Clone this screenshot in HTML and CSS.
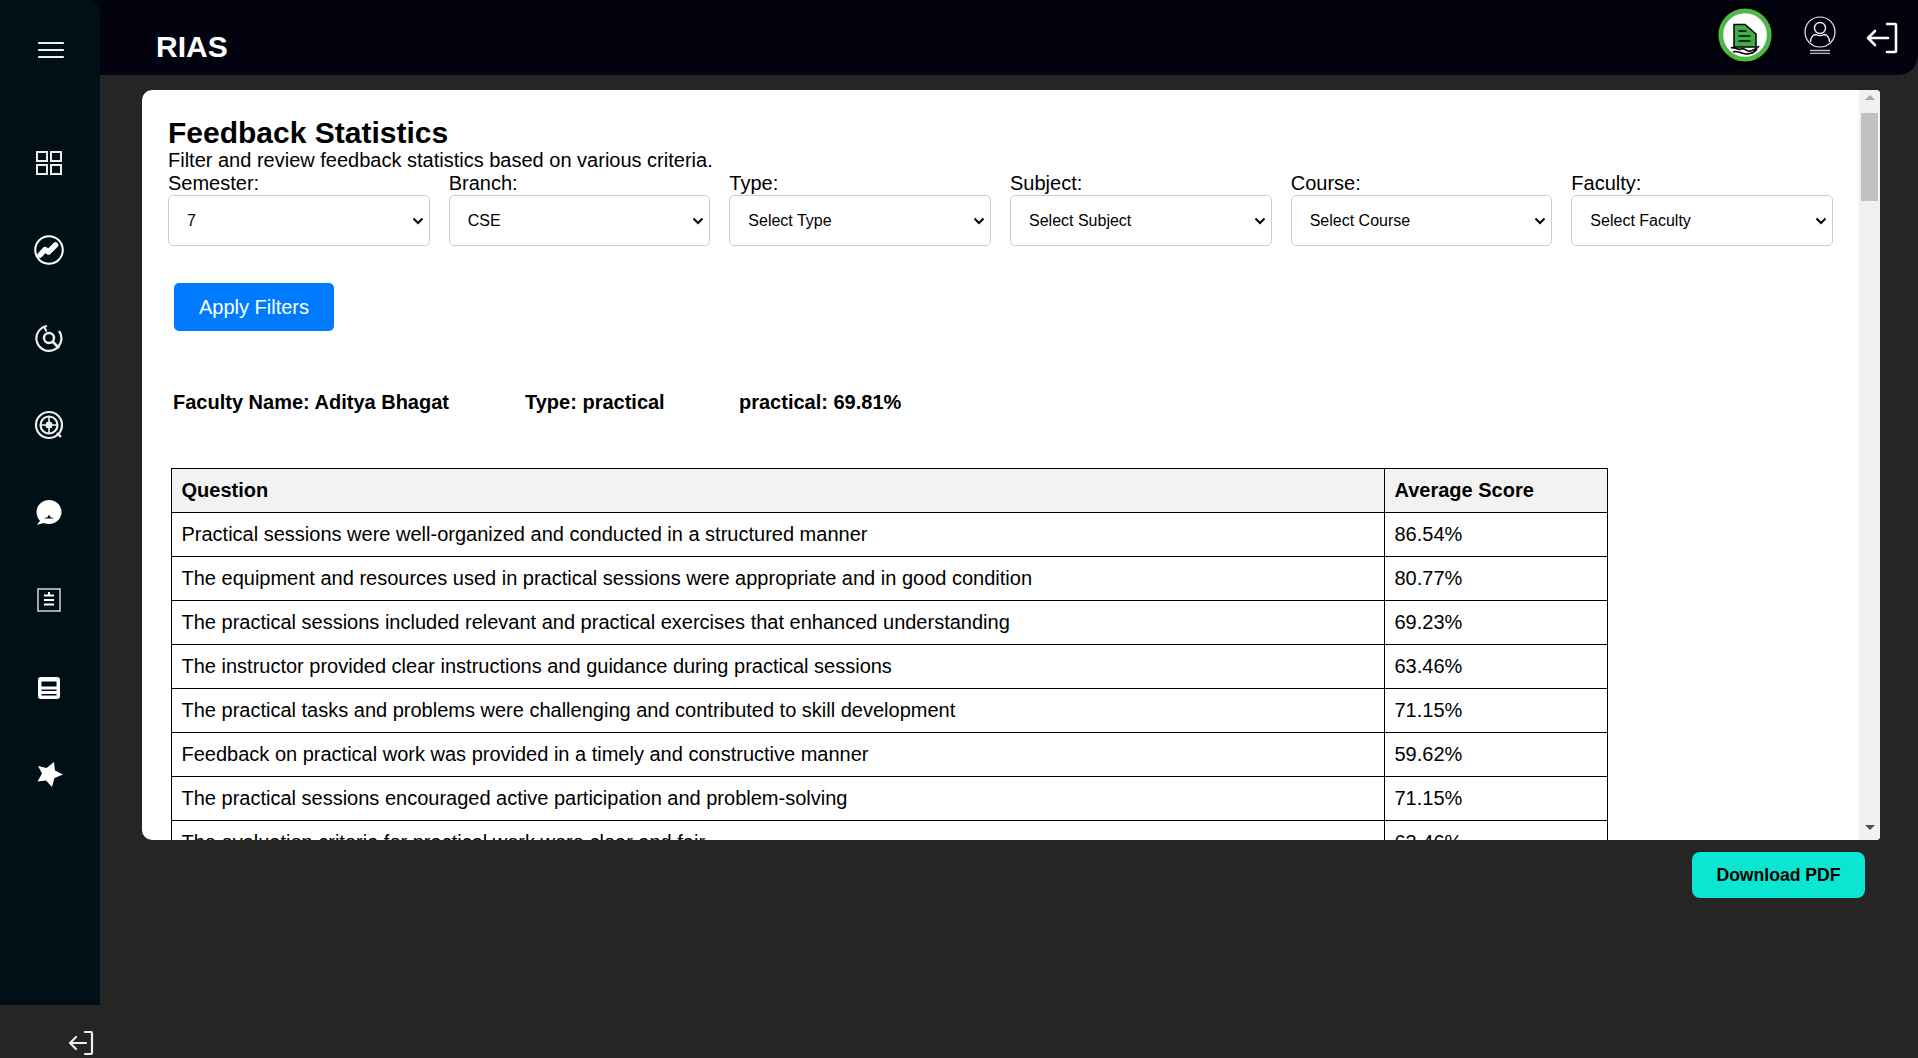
FILE: index.html
```html
<!DOCTYPE html>
<html lang="en">
<head>
  <meta charset="UTF-8">
  <title>RIAS</title>
  <link rel="stylesheet" href="styles.css">
</head>
<body>
  <div id="side-col">
    <nav id="sidebar">
      <div class="menu-btn">
        <svg width="26" height="18" viewBox="0 0 26 18"><path d="M1 2h24M1 9h24M1 16h24" stroke="#eee" stroke-width="2.2" stroke-linecap="round"/></svg>
      </div>
      <div class="nav-items">
        <a class="nav-item"><svg width="26" height="26" viewBox="0 0 26 26" fill="none" stroke="#eee" stroke-width="2"><rect x="1" y="2" width="10" height="9"/><rect x="15" y="2" width="10" height="9"/><rect x="1" y="15" width="10" height="9"/><rect x="15" y="15" width="10" height="9"/></svg></a>
        <a class="nav-item"><svg width="30" height="30" viewBox="0 0 30 30" fill="none" stroke="#fff"><circle cx="15" cy="15" r="13.800" stroke-width="2"/><path d="M6 20l5-5.500 3.500 2.500 7-7" stroke-width="5.500" stroke-linecap="round" stroke-linejoin="round"/></svg></a>
        <a class="nav-item"><svg width="28" height="28" viewBox="0 0 28 28" fill="none" stroke="#eee"><path d="M24 7a12.500 12.500 0 1 1-12-5" stroke-width="2.200"/><path d="M9 2.500l2.500 5" stroke-width="2"/><circle cx="14" cy="14" r="5" stroke-width="2.400"/><path d="M18 18l6 6" stroke-width="2.600"/></svg></a>
        <a class="nav-item"><svg width="30" height="30" viewBox="0 0 30 30" fill="none" stroke="#eee"><circle cx="15" cy="15" r="13" stroke-width="2.200"/><circle cx="15" cy="15" r="8.500" stroke-width="2.200"/><circle cx="15" cy="15" r="3.500" fill="#eee" stroke="none"/><path d="M15 7v16M7 15h16" stroke-width="1.600"/><path d="M23 23l4 4" stroke-width="2.400"/></svg></a>
        <a class="nav-item"><svg width="28" height="28" viewBox="0 0 28 28"><path d="M14 1C7 1 1.500 6.500 1.500 13c0 3.500 1.300 6.500 3.500 8.700L2 26l6.500-2c1.600.7 3.500 1 5.500 1 7 0 12.500-5.300 12.500-12S21 1 14 1z" fill="#fff"/><path d="M9 19.500h10c-1.500-.8-2.500-1-3.500-1.300l-1-2h-1l-1 2c-1 .3-2.500.5-3.500 1.300z" fill="#010f16"/></svg></a>
        <a class="nav-item"><svg width="24" height="24" viewBox="0 0 24 24" fill="none"><rect x="1" y="1" width="22" height="22" stroke="#c9c9c9" stroke-width="1.600"/><path d="M7 7.500h10M7 12h10M7 16.500h10M12 4v3" stroke="#fff" stroke-width="2"/></svg></a>
        <a class="nav-item"><svg width="24" height="24" viewBox="0 0 24 24"><rect x="1" y="1" width="22" height="22" rx="3" fill="#fff"/><path d="M4.500 5.500h15v5h-15zM4.500 13.500h15v1.500h-15zM4.500 18h15v1.500h-15z" fill="#010f16"/></svg></a>
        <a class="nav-item star"><svg width="28" height="28" viewBox="0 0 28 28"><path d="M18 1l1 8.500 8 4-8.500 3.500-2.500 9-6-6.500-8.500 1 4.500-8L2 5l8.500 2z" fill="#fff"/></svg></a>
      </div>
    </nav>
    <div class="side-exit">
      <svg width="26" height="26" viewBox="0 0 26 26" fill="none" stroke="#eee" stroke-width="2.200" stroke-linecap="round" stroke-linejoin="round"><path d="M17 2h6a1 1 0 0 1 1 1v20a1 1 0 0 1-1 1h-6M18 13H2M8 7l-6 6 6 6"/></svg>
    </div>
  </div>

  <div id="main-col">
    <header id="topbar">
      <div class="brand">RIAS</div>
      <div class="top-icons">
        <div class="logo">
          <svg width="62" height="62" viewBox="0 0 62 62">
            <circle cx="31" cy="31" r="31" fill="#000"/>
            <circle cx="31" cy="31" r="24.200" fill="#fff" stroke="#52b548" stroke-width="4.800"/>
            <path d="M20 20.500h11l11 9.500v13H20z" fill="#3fae49" stroke="#000" stroke-width="1.500"/>
            <path d="M24.500 27h8M24.500 32h12M24.500 37h12" stroke="#000" stroke-width="1.500"/>
            <path d="M17 44c4-2 7 3 10 1s5 3 9 2 6-1 9-5M19 48c4-2 8 2 13 2s9-2 11-5" fill="none" stroke="#000" stroke-width="1.600"/>
          </svg>
        </div>
        <div class="user-icon">
          <svg width="34" height="38" viewBox="0 0 34 38" fill="none" stroke="#eee" stroke-width="1.200"><circle cx="17" cy="16" r="15"/><circle cx="17" cy="12" r="5.500" stroke-width="1.400"/><path d="M7.500 26c0-5 3-7.500 5.500-7.500 2 1.500 6 1.500 8 0 2.500 0 5.500 2.500 5.500 7.500" stroke-width="1.400"/><path d="M7 34.500h20M7 37.500h20" stroke="#bbb" stroke-width="1.400"/></svg>
        </div>
        <div class="exit-icon">
          <svg width="32" height="32" viewBox="0 0 32 32" fill="none" stroke="#fff" stroke-width="2.600" stroke-linecap="round" stroke-linejoin="round"><path d="M21 2h8a1 1 0 0 1 1 1v26a1 1 0 0 1-1 1h-8M22 16H2M9 9l-7 7 7 7"/></svg>
        </div>
      </div>
    </header>

    <main id="card">
      <div class="card-body">
        <h1>Feedback Statistics</h1>
        <p class="sub">Filter and review feedback statistics based on various criteria.</p>
        <div class="filters">
          <div class="filter"><label for="f-sem">Semester:</label><select id="f-sem"><option>7</option></select></div>
          <div class="filter"><label for="f-branch">Branch:</label><select id="f-branch"><option>CSE</option></select></div>
          <div class="filter"><label for="f-type">Type:</label><select id="f-type"><option>Select Type</option></select></div>
          <div class="filter"><label for="f-subject">Subject:</label><select id="f-subject"><option>Select Subject</option></select></div>
          <div class="filter"><label for="f-course">Course:</label><select id="f-course"><option>Select Course</option></select></div>
          <div class="filter"><label for="f-faculty">Faculty:</label><select id="f-faculty"><option>Select Faculty</option></select></div>
        </div>
        <button class="apply-btn">Apply Filters</button>
        <div class="summary">
          <span class="s-name">Faculty Name: Aditya Bhagat</span>
          <span class="s-type">Type: practical</span>
          <span>practical: 69.81%</span>
        </div>
        <table class="stats">
          <thead>
            <tr><th>Question</th><th>Average Score</th></tr>
          </thead>
          <tbody>
            <tr><td>Practical sessions were well-organized and conducted in a structured manner</td><td>86.54%</td></tr>
            <tr><td>The equipment and resources used in practical sessions were appropriate and in good condition</td><td>80.77%</td></tr>
            <tr><td>The practical sessions included relevant and practical exercises that enhanced understanding</td><td>69.23%</td></tr>
            <tr><td>The instructor provided clear instructions and guidance during practical sessions</td><td>63.46%</td></tr>
            <tr><td>The practical tasks and problems were challenging and contributed to skill development</td><td>71.15%</td></tr>
            <tr><td>Feedback on practical work was provided in a timely and constructive manner</td><td>59.62%</td></tr>
            <tr><td>The practical sessions encouraged active participation and problem-solving</td><td>71.15%</td></tr>
            <tr><td>The evaluation criteria for practical work were clear and fair</td><td>63.46%</td></tr>
          </tbody>
        </table>
      </div>
      <div class="scrollbar">
        <div class="arrow-up"></div>
        <div class="track"><div class="thumb"></div></div>
        <div class="arrow-down"></div>
      </div>
    </main>

    <div class="pdf-row">
      <button class="pdf-btn">Download PDF</button>
    </div>
  </div>
</body>
</html>
```

FILE: styles.css
```css
html {
  padding: 0;
  margin: 0;
}
body {
  margin: 0;
  height: 1058px;
  overflow: hidden;
  display: flex;
  background: #262525;
  color: #000;
  font-family: "Liberation Sans", Arial, sans-serif;
}

#side-col {
  width: 100px;
  flex-shrink: 0;
  background: #03030f;
}
#sidebar {
  height: 1005px;
  background: #010f16;
  border-top-right-radius: 14px;
  display: flex;
  flex-direction: column;
}
.menu-btn {
  height: 100px;
  display: flex;
  align-items: center;
  justify-content: center;
  padding-left: 2px;
}
.nav-items {
  display: flex;
  flex-direction: column;
  padding-top: 19px;
}
.nav-item {
  height: 87.5px;
  display: flex;
  align-items: center;
  justify-content: center;
  padding-right: 2px;
}
.nav-item.star {
  padding-right: 0;
}
.side-exit {
  height: 53px;
  background: #262525;
  display: flex;
  align-items: flex-end;
  justify-content: flex-end;
  padding-right: 6px;
  padding-bottom: 2px;
  box-sizing: border-box;
}

#main-col {
  flex-grow: 1;
  display: flex;
  flex-direction: column;
  min-width: 0;
}

#topbar {
  height: 75px;
  flex-shrink: 0;
  background: #03030f;
  border-bottom-right-radius: 20px;
  display: flex;
  align-items: center;
  justify-content: space-between;
  padding-left: 56px;
  padding-right: 20px;
}
.brand {
  color: #fff;
  font-size: 30px;
  font-weight: bold;
  padding-top: 18px;
}
.top-icons {
  display: flex;
  align-items: center;
}
.logo {
  height: 62px;
  margin-right: 27px;
  margin-top: -5px;
}
.user-icon {
  height: 38px;
  margin-right: 29px;
  margin-top: -5px;
}
.exit-icon {
  height: 32px;
}

#card {
  margin: 15px 38px 0 42px;
  height: 750px;
  flex-shrink: 0;
  background: #fff;
  border-radius: 10px 4px 4px 10px;
  overflow: hidden;
  display: flex;
}
.card-body {
  flex-grow: 1;
  min-width: 0;
  padding: 26px 26px 0 26px;
  overflow: hidden;
}

h1 {
  margin: 0;
  font-size: 30px;
  line-height: 33px;
}
.sub {
  margin: 0;
  font-size: 20px;
  line-height: 23px;
}

.filters {
  display: flex;
  gap: 19px;
}
.filter {
  flex: 1 1 0;
  display: flex;
  flex-direction: column;
}
.filter label {
  font-size: 20px;
  line-height: 23px;
}
.filter select {
  appearance: none;
  height: 51px;
  padding: 0 24px 0 18px;
  background: #fff url("data:image/svg+xml,%3Csvg xmlns='http://www.w3.org/2000/svg' width='12' height='8' viewBox='0 0 12 8'%3E%3Cpath d='M1.500 1.500L6 6l4.500-4.500' fill='none' stroke='%23000' stroke-width='2'/%3E%3C/svg%3E") no-repeat right 5px center;
  border: 1px solid #ccc;
  border-radius: 5px;
  font-size: 16px;
  font-family: "Liberation Sans", Arial, sans-serif;
  color: #000;
}

.apply-btn {
  display: block;
  margin: 37px 0 0 6px;
  width: 160px;
  height: 48px;
  border: 0;
  border-radius: 5px;
  background: #007bff;
  color: #fff;
  font-size: 20px;
  font-family: "Liberation Sans", Arial, sans-serif;
}

.summary {
  display: flex;
  margin: 60px 0 0 5px;
  font-size: 20px;
  line-height: 23px;
  font-weight: bold;
}
.s-name {
  width: 352px;
}
.s-type {
  width: 214px;
}

.stats {
  margin: 54px 0 0 3px;
  width: 1437px;
  border-collapse: collapse;
  font-size: 20px;
}
.stats th,
.stats td {
  border: 1.5px solid #000;
  height: 44px;
  padding: 0 9.5px;
  text-align: left;
  box-sizing: border-box;
}
.stats th {
  background: #f2f2f2;
}
.stats th:last-child,
.stats td:last-child {
  width: 223px;
}

.scrollbar {
  width: 21px;
  flex-shrink: 0;
  background: #f1f1f1;
  display: flex;
  flex-direction: column;
  align-items: center;
}
.track {
  flex-grow: 1;
  width: 17px;
}
.thumb {
  height: 88px;
  margin-top: 13px;
  background: #c1c1c1;
}
.arrow-up,
.arrow-down {
  width: 0;
  height: 5px;
  box-sizing: border-box;
  border-left: 5px solid transparent;
  border-right: 5px solid transparent;
}
.arrow-up {
  margin-top: 5px;
  border-bottom: 5px solid #a8a8a8;
}
.arrow-down {
  margin-bottom: 10px;
  border-top: 5px solid #505050;
}

.pdf-row {
  display: flex;
  justify-content: flex-end;
  padding: 12px 53px 0 0;
}
.pdf-btn {
  width: 173px;
  height: 46px;
  border: 0;
  border-radius: 8px;
  background: #0ae6d2;
  color: #000;
  font-size: 17.6px;
  font-weight: bold;
  font-family: "Liberation Sans", Arial, sans-serif;
}
```
